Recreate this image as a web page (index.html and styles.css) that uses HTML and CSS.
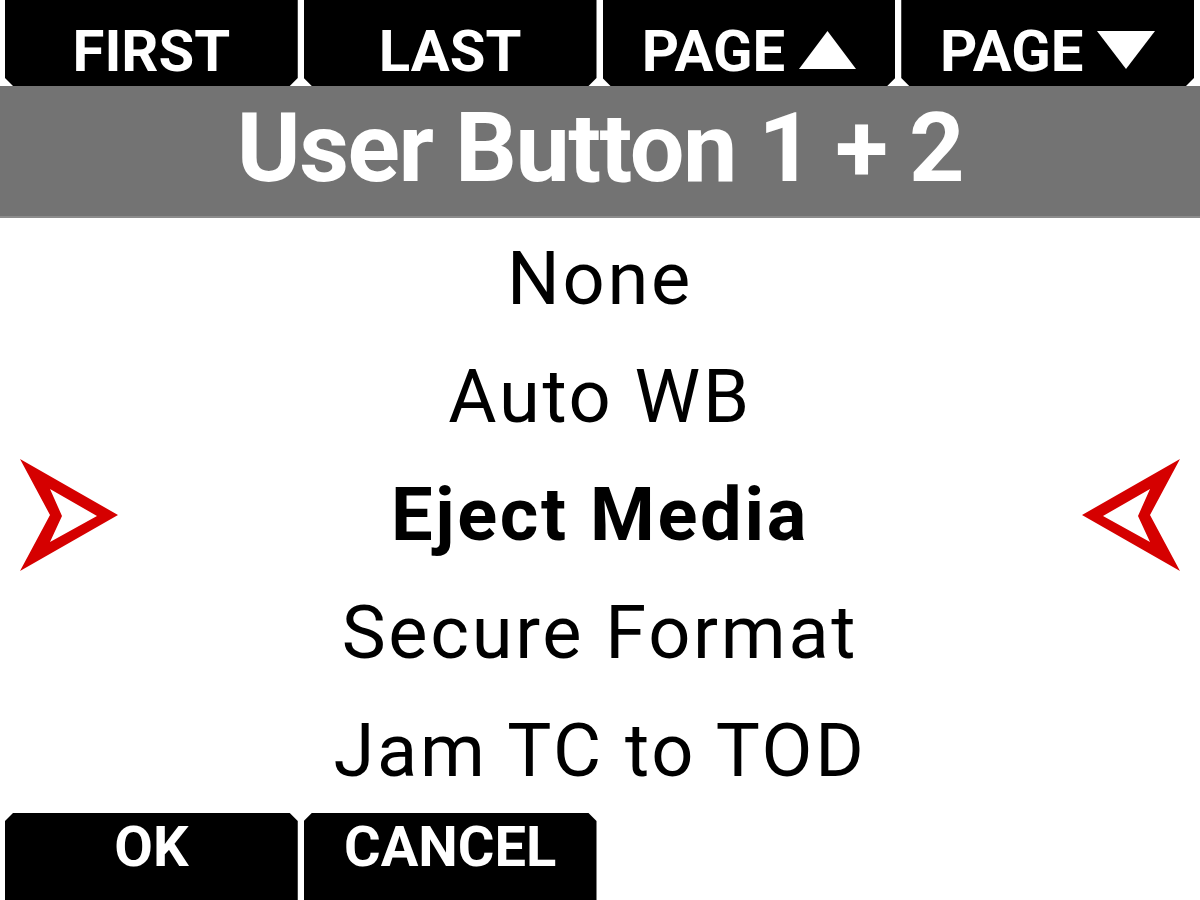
FILE: index.html
```html
<!DOCTYPE html>
<html lang="en">
<head>
  <meta charset="UTF-8" />
  <meta name="viewport" content="width=device-width, initial-scale=1.0" />
  <title>User Button 1 + 2</title>
  <link rel="stylesheet" href="styles.css">
</head>
<body>
  <div class="screen">
    <div class="tabbar top">
      <div class="tab">FIRST</div>
      <div class="tab">LAST</div>
      <div class="tab">PAGE
        <svg class="tri" width="57" height="38" viewBox="0 0 57 38"><polygon points="28.5,0 57,38 0,38" fill="#fff"/></svg>
      </div>
      <div class="tab">PAGE
        <svg class="tri" width="58" height="38" viewBox="0 0 58 38"><polygon points="0,0 58,0 29,38" fill="#fff"/></svg>
      </div>
    </div>

    <div class="title">User Button 1 + 2</div>

    <div class="list">
      <div class="item">None</div>
      <div class="item">Auto WB</div>
      <div class="item selected">
        <svg class="arrow" width="98" height="112" viewBox="0 0 98 112"><path d="M0 0 L98 56 L0 112 L30 56 Z M30 30 L42 57 L30 83 L77 57 Z" fill="#d50000" fill-rule="evenodd"/></svg>
        <span>Eject Media</span>
        <svg class="arrow flip" width="98" height="112" viewBox="0 0 98 112"><path d="M0 0 L98 56 L0 112 L30 56 Z M30 30 L42 57 L30 83 L77 57 Z" fill="#d50000" fill-rule="evenodd"/></svg>
      </div>
      <div class="item">Secure Format</div>
      <div class="item">Jam TC to TOD</div>
    </div>

    <div class="tabbar bottom">
      <div class="tab">OK</div>
      <div class="tab">CANCEL</div>
    </div>
  </div>
</body>
</html>
```

FILE: styles.css
```css
body {
  margin: 0;
  background: #fff;
  font-family: Roboto, "Liberation Sans", sans-serif;
}
.screen {
  width: 1200px;
  height: 900px;
  display: flex;
  flex-direction: column;
  overflow: hidden;
}
.tabbar {
  display: grid;
  grid-template-columns: repeat(4, 1fr);
  gap: 6px;
  padding: 0 6px 0 5px;
  background: #fff;
}
.tab {
  background: #000;
  color: #fff;
  font-weight: bold;
  display: flex;
  justify-content: center;
  align-items: flex-start;
  line-height: 1;
}
.top .tab {
  height: 86px;
  font-size: 58px;
  padding-top: 22px;
  box-sizing: border-box;
  clip-path: polygon(0 0, 100% 0, 100% calc(100% - 8px), calc(100% - 8px) 100%, 8px 100%, 0 calc(100% - 8px));
}
.tri {
  margin-left: 14px;
  margin-top: 9px;
}
.title {
  height: 132px;
  box-sizing: border-box;
  background: #737373;
  border-bottom: 2px solid #8c8c8c;
  color: #fff;
  font-weight: bold;
  font-size: 97px;
  letter-spacing: -1.5px;
  line-height: 1;
  padding-top: 14px;
  text-align: center;
}
.list {
  flex: 1;
  padding-top: 2px;
}
.item {
  height: 118px;
  line-height: 118px;
  font-size: 74px;
  letter-spacing: 2.7px;
  color: #000;
  text-align: center;
}
.selected {
  display: flex;
  justify-content: space-between;
  align-items: center;
  padding: 0 20px;
  font-weight: bold;
}
.arrow.flip {
  transform: scaleX(-1);
}
.bottom .tab {
  height: 87px;
  font-size: 56px;
  padding-top: 6px;
  box-sizing: border-box;
  clip-path: polygon(8px 0, calc(100% - 8px) 0, 100% 8px, 100% 100%, 0 100%, 0 8px);
}
```
